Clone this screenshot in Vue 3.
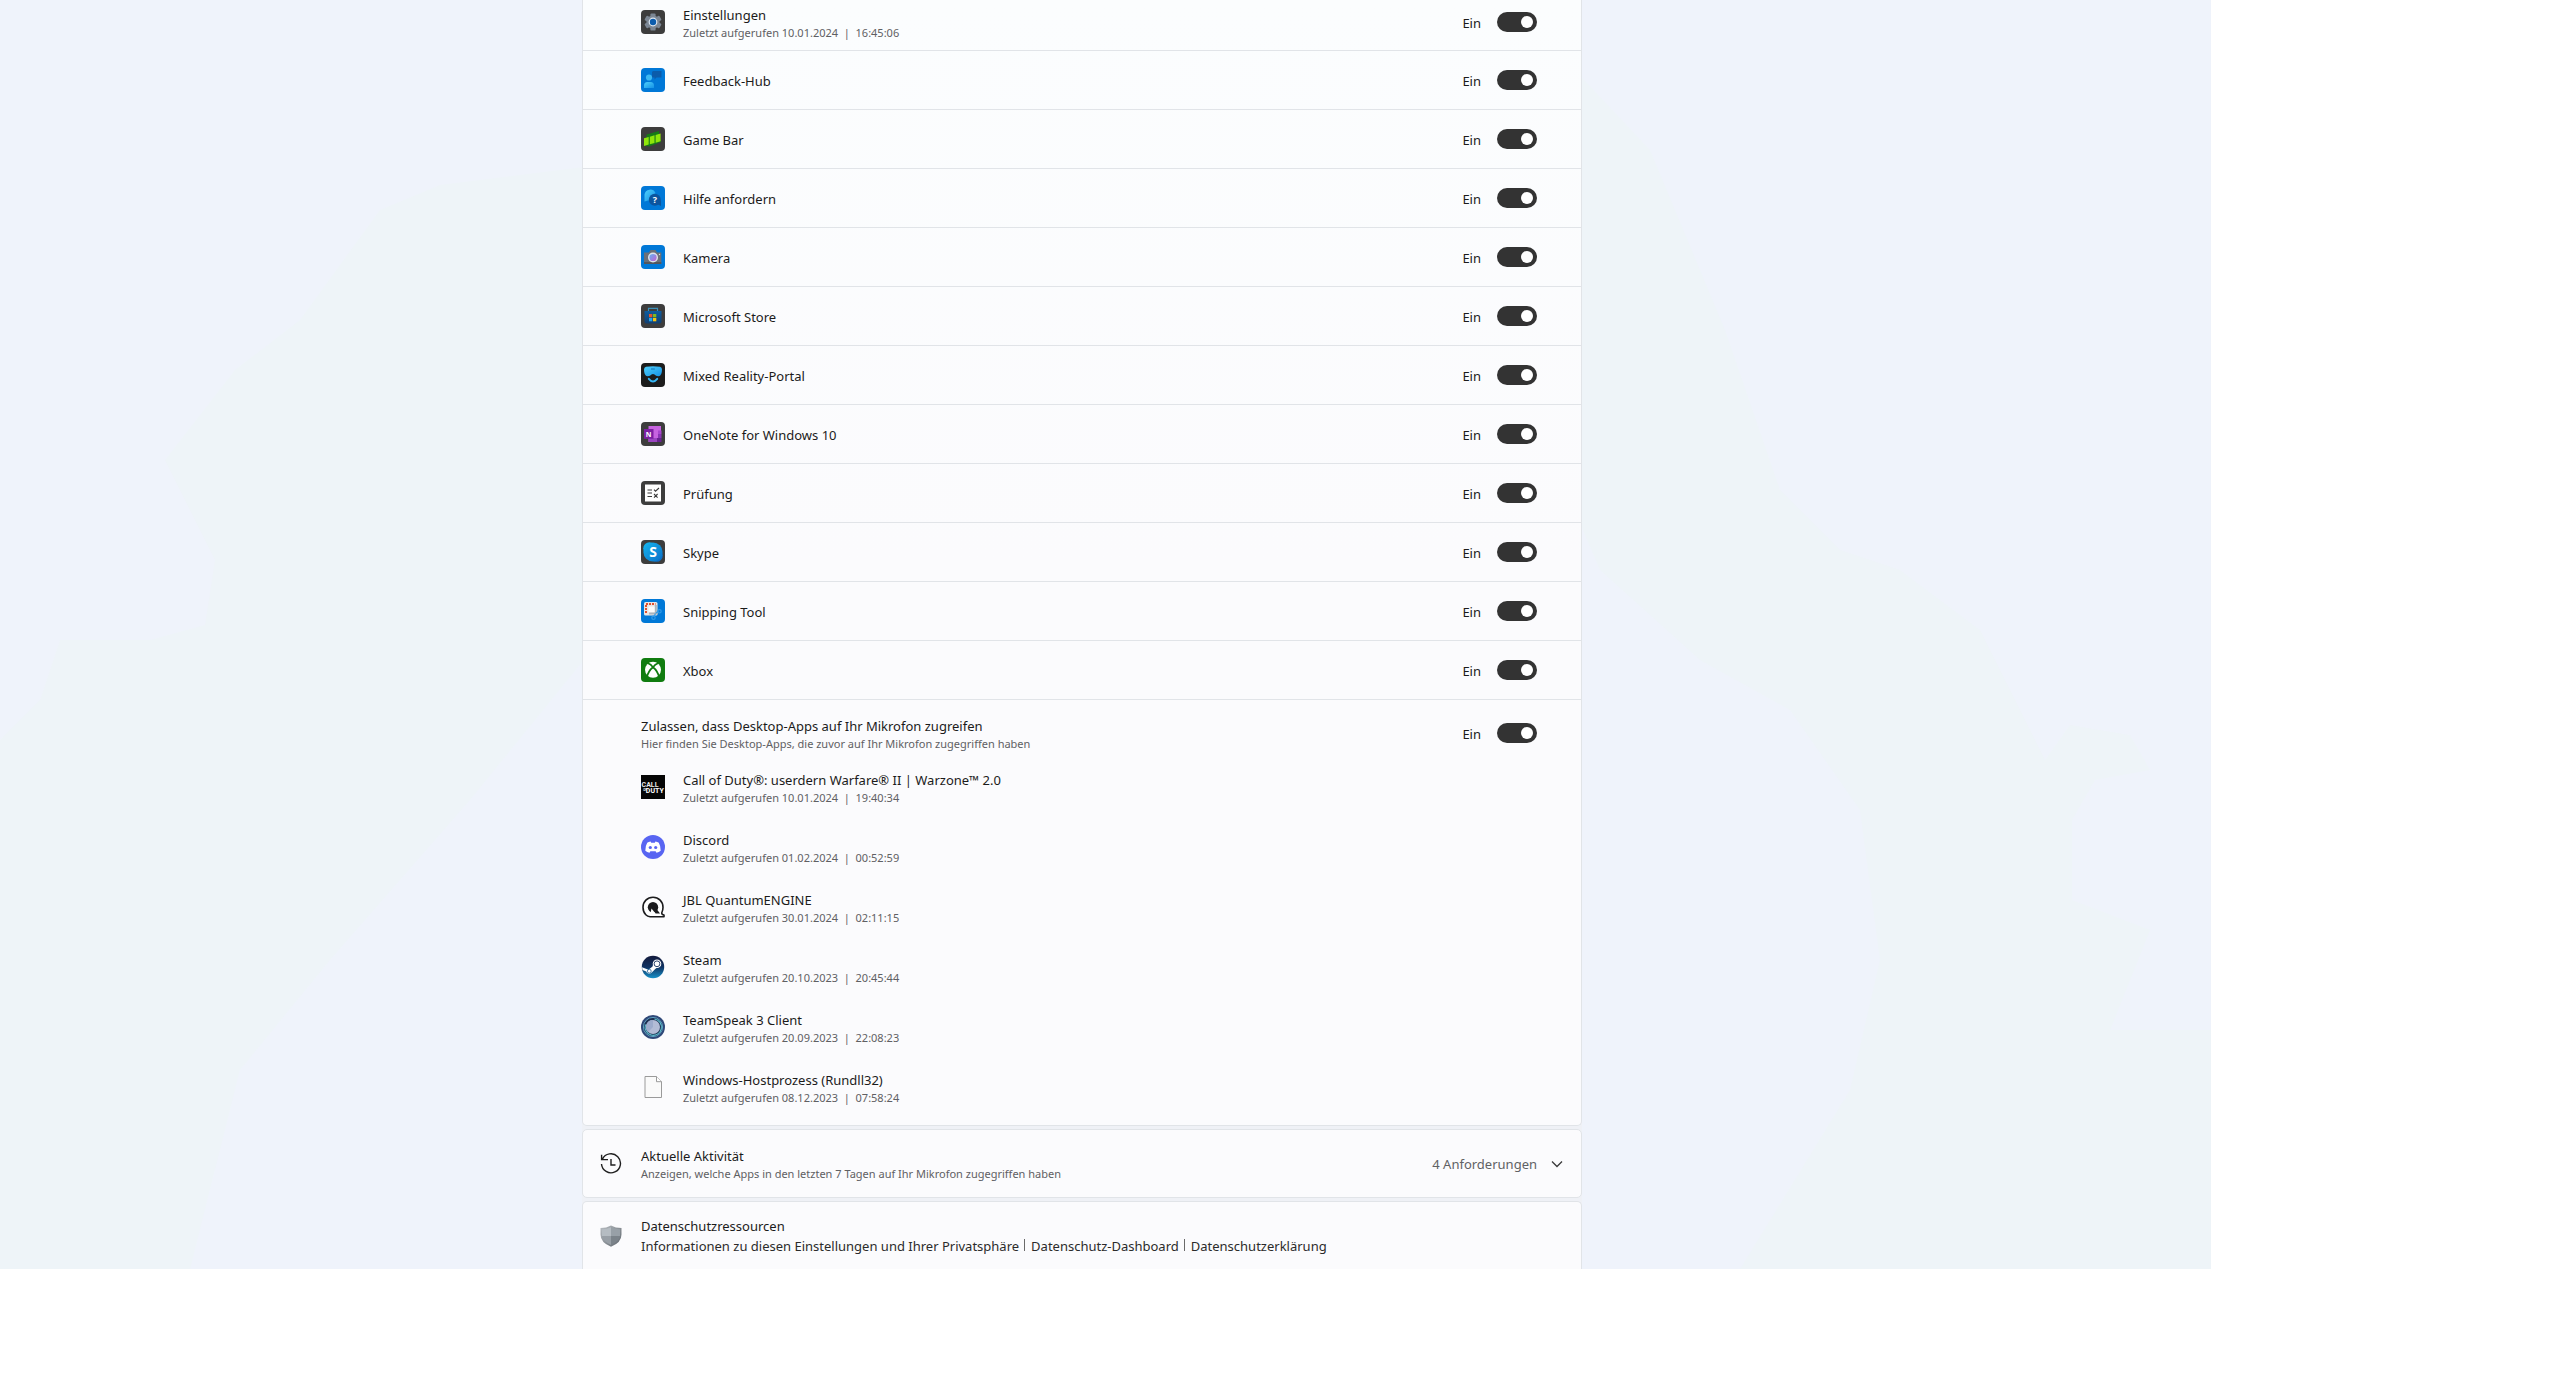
<script setup>
import { ref } from 'vue'

// Store-Apps mit eigenem Schalter
const apps = ref([
  { id: 'settings', name: 'Einstellungen', lastAccess: '10.01.2024  |  16:45:06', on: true },
  { id: 'feedback', name: 'Feedback-Hub', on: true },
  { id: 'gamebar', name: 'Game Bar', on: true },
  { id: 'help', name: 'Hilfe anfordern', on: true },
  { id: 'camera', name: 'Kamera', on: true },
  { id: 'store', name: 'Microsoft Store', on: true },
  { id: 'mixed', name: 'Mixed Reality-Portal', on: true },
  { id: 'onenote', name: 'OneNote for Windows 10', on: true },
  { id: 'test', name: 'Prüfung', on: true },
  { id: 'skype', name: 'Skype', on: true },
  { id: 'snipping', name: 'Snipping Tool', on: true },
  { id: 'xbox', name: 'Xbox', on: true }
])

const desktopAccess = ref(true)

const desktopApps = [
  { id: 'cod', name: 'Call of Duty®: userdern Warfare® II | Warzone™ 2.0', lastAccess: '10.01.2024  |  19:40:34' },
  { id: 'discord', name: 'Discord', lastAccess: '01.02.2024  |  00:52:59' },
  { id: 'jbl', name: 'JBL QuantumENGINE', lastAccess: '30.01.2024  |  02:11:15' },
  { id: 'steam', name: 'Steam', lastAccess: '20.10.2023  |  20:45:44' },
  { id: 'teamspeak', name: 'TeamSpeak 3 Client', lastAccess: '20.09.2023  |  22:08:23' },
  { id: 'file', name: 'Windows-Hostprozess (Rundll32)', lastAccess: '08.12.2023  |  07:58:24' }
]

const links = [
  'Informationen zu diesen Einstellungen und Ihrer Privatsphäre',
  'Datenschutz-Dashboard',
  'Datenschutzerklärung'
]
</script>

<template>
  <!-- Farbverläufe der Symbole -->
  <svg class="gradients" aria-hidden="true">
    <defs>
      <linearGradient id="g-sky" x1="0" y1="0" x2="1" y2="1">
        <stop offset="0" stop-color="#4fd0fb" /><stop offset="1" stop-color="#1492e6" />
      </linearGradient>
      <linearGradient id="g-skype" x1="0" y1="0" x2="1" y2="1">
        <stop offset="0" stop-color="#14b4ee" /><stop offset="1" stop-color="#0a6fc8" />
      </linearGradient>
      <linearGradient id="g-bag" x1="0" y1="0" x2="0" y2="1">
        <stop offset="0" stop-color="#0f5c9e" /><stop offset="1" stop-color="#123f70" />
      </linearGradient>
      <linearGradient id="g-steam" x1="0" y1="0" x2="0" y2="1">
        <stop offset="0" stop-color="#141a3c" /><stop offset="0.5" stop-color="#103262" /><stop offset="1" stop-color="#1590c8" />
      </linearGradient>
      <linearGradient id="g-lens" x1="0" y1="0" x2="1" y2="1">
        <stop offset="0" stop-color="#5fb4f4" /><stop offset="1" stop-color="#c85fd0" />
      </linearGradient>
      <linearGradient id="g-shield" x1="0" y1="0" x2="1" y2="1">
        <stop offset="0" stop-color="#b9bec3" /><stop offset="1" stop-color="#5f666d" />
      </linearGradient>
    </defs>
  </svg>

  <!-- Symbole für alle Listeneinträge -->
  <svg class="sprites" aria-hidden="true">
    <symbol id="settings" viewBox="0 0 24 24">
      <rect width="24" height="24" rx="4" fill="#3d3d3d" />
      <g fill="#7c8794">
        <rect x="9.4" y="3.4" width="5.2" height="17.2" rx="1.2" />
        <rect x="9.4" y="3.4" width="5.2" height="17.2" rx="1.2" transform="rotate(60 12 12)" />
        <rect x="9.4" y="3.4" width="5.2" height="17.2" rx="1.2" transform="rotate(120 12 12)" />
        <circle cx="12" cy="12" r="6.6" />
      </g>
      <circle cx="12" cy="12" r="4.4" fill="#dfe7ef" />
      <circle cx="12" cy="12" r="3.2" fill="#0b5cad" />
    </symbol>

    <symbol id="feedback" viewBox="0 0 24 24">
      <rect width="24" height="24" rx="4" fill="#0078d7" />
      <path d="M12 3h8.500v6.500h-5l-2 2v-2H11V4z" fill="#0b5cab" />
      <circle cx="8" cy="9.500" r="3.100" fill="#3cb8f2" />
      <path d="M3 20v-2.500A3.500 3.500 0 0 1 6.500 14h3A3.500 3.500 0 0 1 13 17.500V20z" fill="url(#g-sky)" />
    </symbol>

    <symbol id="gamebar" viewBox="0 0 24 24">
      <rect width="24" height="24" rx="4" fill="#3d3d3d" />
      <path d="M5.500 7.500 18 4v3L20 15 8 19.500 5 19z" fill="#167a16" />
      <path d="M3 11.200l4.700-1.300v7.600L3 18.900zM8.800 9.700l4.700-1.400v7.700l-4.700 1.300zM14.600 8l5-1.500v7.700l-5 1.500z" fill="#8fe60b" />
    </symbol>

    <symbol id="help" viewBox="0 0 24 24">
      <rect width="24" height="24" rx="4" fill="#0078d7" />
      <path d="M3.500 15.500V8.500A5.800 5.800 0 0 1 14.500 7L9 14z" fill="url(#g-sky)" />
      <circle cx="13.800" cy="13.800" r="6" fill="#0b559f" />
      <path d="M16 18l4 2v-6z" fill="#0b559f" />
      <text x="13.800" y="17" class="glyph" font-size="9" fill="#fff">?</text>
    </symbol>

    <symbol id="camera" viewBox="0 0 24 24">
      <rect width="24" height="24" rx="4" fill="#0078d7" />
      <path d="M3 7.500h5l1.500-2.500h5l1.500 2.500h4.300V19H3z" fill="#6b7078" />
      <path d="M3 17h17.300v2H3z" fill="#53575e" />
      <circle cx="18.500" cy="9.500" r="0.700" fill="#d5d8dc" />
      <circle cx="12" cy="12.500" r="5" fill="#dde3ec" />
      <circle cx="12" cy="12.500" r="3.600" fill="url(#g-lens)" />
    </symbol>

    <symbol id="store" viewBox="0 0 24 24">
      <rect width="24" height="24" rx="4" fill="#3d3d3d" />
      <path d="M7.500 7V4.300h9V7" fill="none" stroke="#3c8fb8" stroke-width="1.200" />
      <path d="M3.500 7h17v10.500a2 2 0 0 1-2 2h-13a2 2 0 0 1-2-2z" fill="url(#g-bag)" />
      <path d="M8 10h3.300v3.300H8z" fill="#e8562a" />
      <path d="M12 10h3.300v3.300H12z" fill="#7fba1e" />
      <path d="M8 14h3.300v3.300H8z" fill="#25a5ea" />
      <path d="M12 14h3.300v3.300H12z" fill="#fbc30f" />
    </symbol>

    <symbol id="mixed" viewBox="0 0 24 24">
      <rect width="24" height="24" rx="4" fill="#1c1c1c" />
      <path d="M5 3.800Q12 2.800 19 3.800Q21 4.200 21 6.500Q21 13 17.500 13.300Q15 13.500 13.500 11.500Q12 10.300 10.500 11.500Q9 13.500 6.500 13.300Q3 13 3 6.500Q3 4.200 5 3.800z" fill="url(#g-sky)" />
      <path d="M10 6h3.800" stroke="#1270b5" stroke-width="1" />
      <path d="M7.800 15.800Q12 21 16.200 15.800" fill="none" stroke="#35b6f5" stroke-width="2" stroke-linecap="round" />
    </symbol>

    <symbol id="onenote" viewBox="0 0 24 24">
      <rect width="24" height="24" rx="4" fill="#3d3d3d" />
      <path d="M7.500 4H20v16H7.500z" fill="#c763e0" />
      <path d="M17 8.500h3.500V12H17z" fill="#a946cf" />
      <path d="M17 12h3.500v4H17z" fill="#8a35b5" />
      <path d="M13.500 16h7v4h-7z" fill="#6a2390" />
      <path d="M7.500 16h8.500v4H7.500z" fill="#9a45c0" />
      <path d="M3 7h9.500v9.800H3z" fill="#7c1fa3" />
      <text x="7.600" y="14.600" class="glyph" font-size="7" fill="#fff">N</text>
    </symbol>

    <symbol id="test" viewBox="0 0 24 24">
      <rect width="24" height="24" rx="4" fill="#3d3d3d" />
      <path d="M4 3.500h16v17H4z" fill="#fff" />
      <path d="M6.500 9h4.500M6.500 12h4.500M6.500 15.500h4.500M13 8.700l1.500 1.500L18 7M13 13l3.600 3.600M16.600 13L13 16.600" fill="none" stroke="#3a3a3a" stroke-width="1.100" />
    </symbol>

    <symbol id="skype" viewBox="0 0 24 24">
      <rect width="24" height="24" rx="4" fill="#3d3d3d" />
      <circle cx="8.500" cy="8.500" r="6.300" fill="#12aeea" />
      <circle cx="15.500" cy="15.500" r="6.300" fill="#0a6fc8" />
      <circle cx="12" cy="12" r="9.600" fill="url(#g-skype)" />
      <text x="12" y="17" class="glyph" font-size="14" fill="#fff">S</text>
    </symbol>

    <symbol id="snipping" viewBox="0 0 24 24">
      <rect width="24" height="24" rx="4" fill="#0078d7" />
      <rect x="3" y="3" width="13.500" height="13.500" rx="1.500" fill="#e9e5e4" />
      <path d="M5 14V5h9.500" fill="none" stroke="#e0502e" stroke-width="2" stroke-dasharray="2 1" />
      <path d="M7.500 7.500h6.500v6H7.500z" fill="#fbfbfb" />
      <path d="M14.800 6v9.500M8 14.500h8.500" stroke="#a9b4bd" stroke-width="2" />
      <path d="M15 14l2.500-2M14.500 14.500l-1.500 3" stroke="#2f9ae8" stroke-width="1.200" />
      <circle cx="18.500" cy="12.300" r="1.700" fill="none" stroke="#2f9ae8" stroke-width="1.200" />
      <circle cx="12.500" cy="18.800" r="1.700" fill="none" stroke="#2f9ae8" stroke-width="1.200" />
    </symbol>

    <symbol id="xbox" viewBox="0 0 24 24">
      <rect width="24" height="24" rx="4" fill="#107c10" />
      <circle cx="12" cy="11.800" r="8" fill="#fff" />
      <path d="M5.500 20Q7.500 12.500 12 9.200Q16.500 12.500 18.500 20" fill="none" stroke="#107c10" stroke-width="1.800" />
      <path d="M7 5.200Q10 6.200 12 9.200Q14 6.200 17 5.200" fill="none" stroke="#107c10" stroke-width="1.600" />
    </symbol>

    <symbol id="cod" viewBox="0 0 24 24">
      <rect width="24" height="24" fill="#050505" />
      <text x="9" y="12" class="glyph narrow" font-size="7" fill="#e8e8e8">CALL</text>
      <text x="4" y="15.500" class="glyph narrow" font-size="3" fill="#e8e8e8">OF</text>
      <text x="13.800" y="18.200" class="glyph narrow" font-size="7" fill="#fff">DUTY</text>
    </symbol>

    <symbol id="discord" viewBox="0 0 24 24">
      <circle cx="12" cy="12" r="12" fill="#5865f2" />
      <path d="M9.600 6.600Q7.500 6.900 6.200 7.700Q4.200 11 4.300 15.700Q6 17.200 8.500 17.700L9.400 16.300H14.600L15.500 17.700Q18 17.200 19.700 15.700Q19.800 11 17.800 7.700Q16.500 6.900 14.400 6.600L13.800 7.700H10.200z" fill="#fff" />
      <circle cx="9.300" cy="12.500" r="1.600" fill="#5865f2" />
      <circle cx="14.700" cy="12.500" r="1.600" fill="#5865f2" />
    </symbol>

    <symbol id="jbl" viewBox="0 0 24 24">
      <path d="M12 2.300C6.300 2.300 2 6.500 2 12.300C2 15.500 3 18 4.800 19.800Q6.500 21.500 9 21.700H23V20Q20.800 19.800 20.700 18Q22 15.500 22 12.300C22 6.500 17.700 2.300 12 2.300z" fill="#fff" stroke="#1c1c1e" stroke-width="1.600" stroke-linejoin="round" />
      <circle cx="12" cy="12.200" r="5.200" fill="#1c1c1e" />
      <path d="M11 12.500h3.500l4.500 6h-4.500z" fill="#1c1c1e" />
      <path d="M9.500 18.500L10.500 13.500L14.500 18.500z" fill="#fff" />
    </symbol>

    <symbol id="steam" viewBox="0 0 24 24">
      <circle cx="12" cy="12" r="11.200" fill="url(#g-steam)" />
      <path d="M1 12.200L7.500 14.800L11.500 11.500L12.500 8.200L20 10L14.500 13.800L11 17.200Q9.500 19.200 7.300 18.500Q5.500 18 5.300 16.500L1.500 14.900z" fill="#fff" />
      <circle cx="16" cy="8.800" r="4.300" fill="#fff" />
      <circle cx="16" cy="8.800" r="2.900" fill="none" stroke="#16305c" stroke-width="0.900" />
      <circle cx="8.300" cy="16.200" r="1.900" fill="none" stroke="#1a5c94" stroke-width="0.800" />
    </symbol>

    <symbol id="teamspeak" viewBox="0 0 24 24">
      <circle cx="12" cy="12" r="12" fill="#2f4878" />
      <circle cx="12" cy="12" r="9.600" fill="#1e3152" stroke="#5f9fc0" stroke-width="1" />
      <circle cx="12" cy="12" r="7" fill="#b3bcd6" />
      <path d="M12 5A7 7 0 0 0 7 17L12 12z" fill="#9dabcc" />
      <path d="M13.500 4A8.200 8.200 0 1 1 4.500 9.500" fill="none" stroke="#5fc0d0" stroke-width="1.100" />
    </symbol>

    <symbol id="file" viewBox="0 0 24 24">
      <path d="M4 1.500h11.500l5 5.200v15.800H4z" fill="#fafafa" stroke="#9a9a9a" stroke-width="1" />
      <path d="M15.500 1.500v5.200h5" fill="#fff" stroke="#9a9a9a" stroke-width="1" />
    </symbol>
  </svg>

  <main class="settings-page">
    <svg class="backdrop" viewBox="0 0 2211 1269" preserveAspectRatio="none" aria-hidden="true">
      <path d="M600 165L440 185L380 210L300 320L235 370L165 460L215 560L205 625L150 640L60 640L40 700L0 740V1269H190L240 1070L330 960L470 800L600 640z" />
      <path d="M1570 65L1650 150L1725 330L1780 490L1840 550L1900 570L1980 630L2045 760L2070 725L2130 735L2150 770L2095 780L2072 820V900L2150 930L2110 1030H2211V1269H1740L1850 1090L1880 960L1860 810L1790 710L1700 660L1600 570L1570 500z" />
    </svg>

    <div class="content">
      <section class="card">
        <ul class="app-list">
          <li v-for="app in apps" :key="app.id" class="app-row">
            <svg class="app-icon"><use :href="'#' + app.id" /></svg>
            <div class="labels">
              <span :id="'name-' + app.id" class="title">{{ app.name }}</span>
              <span v-if="app.lastAccess" class="sub">Zuletzt aufgerufen {{ app.lastAccess }}</span>
            </div>
            <label class="toggle">
              <span>{{ app.on ? 'Ein' : 'Aus' }}</span>
              <input v-model="app.on" type="checkbox" role="switch" :aria-describedby="'name-' + app.id">
            </label>
          </li>
        </ul>

        <div class="desktop-head">
          <div class="labels">
            <span id="desktop-title" class="title">Zulassen, dass Desktop-Apps auf Ihr Mikrofon zugreifen</span>
            <span class="sub">Hier finden Sie Desktop-Apps, die zuvor auf Ihr Mikrofon zugegriffen haben</span>
          </div>
          <label class="toggle">
            <span>{{ desktopAccess ? 'Ein' : 'Aus' }}</span>
            <input v-model="desktopAccess" type="checkbox" role="switch" aria-describedby="desktop-title">
          </label>
        </div>

        <ul class="desktop-list">
          <li v-for="app in desktopApps" :key="app.id" class="desktop-row">
            <svg class="app-icon"><use :href="'#' + app.id" /></svg>
            <div class="labels">
              <span class="title">{{ app.name }}</span>
              <span class="sub">Zuletzt aufgerufen {{ app.lastAccess }}</span>
            </div>
          </li>
        </ul>
      </section>

      <button type="button" class="card activity">
        <svg class="lead-icon" viewBox="0 0 22 22" fill="none" stroke="#1f1f1f" stroke-width="1.4">
          <path d="M2.400 6.200A9.500 9.500 0 1 1 1.500 11M1.600 1.800V6.600H8M11 6v6h4.500" />
        </svg>
        <span class="labels">
          <span class="title">Aktuelle Aktivität</span>
          <span class="sub">Anzeigen, welche Apps in den letzten 7 Tagen auf Ihr Mikrofon zugegriffen haben</span>
        </span>
        <span class="count">4 Anforderungen</span>
        <svg class="chevron" viewBox="0 0 12 12" fill="none" stroke="#3a3a3a" stroke-width="1.3">
          <path d="M1 3.500l5 5 5-5" />
        </svg>
      </button>

      <section class="card resources">
        <svg class="lead-icon" viewBox="0 0 22 22">
          <path d="M11 0.500Q15.500 3 21.500 3V9.500Q21.500 17.500 11 21.800Q0.500 17.500 0.500 9.500V3Q6.500 3 11 0.500z" fill="url(#g-shield)" />
          <path d="M11 2.200V11H2V4.200Q7 4.200 11 2.200z" fill="#b5bcc2" />
          <path d="M11 2.200V11H20V4.200Q15 4.200 11 2.200z" fill="#98a0a7" />
          <path d="M11 11V20Q3 16.500 2 11z" fill="#989fa6" />
          <path d="M11 11V20Q19 16.500 20 11z" fill="#7b838a" />
        </svg>
        <div class="labels">
          <span class="title">Datenschutzressourcen</span>
          <nav class="links">
            <a v-for="link in links" :key="link" href="#">{{ link }}</a>
          </nav>
        </div>
      </section>
    </div>
  </main>
</template>

<style>
body {
  margin: 0;
  background: #fff;
}
</style>

<style scoped>
.gradients {
  position: absolute;
  width: 0;
  height: 0;
}
.sprites {
  display: none;
}
.glyph {
  font-family: "Open Sans", sans-serif;
  font-weight: 700;
  text-anchor: middle;
}
.glyph.narrow {
  font-family: Roboto, sans-serif;
}
.settings-page {
  position: relative;
  display: grid;
  grid-template-columns: 582fr minmax(640px, 1000px) 629fr;
  width: calc(100% - 349px);
  overflow: hidden;
  background: #eff3fb;
  color: #1b1b1b;
  font-family: "Noto Sans", "Open Sans", sans-serif;
  font-size: 13px;
  line-height: 20px;
}
.backdrop {
  position: absolute;
  width: 100%;
  height: 100%;
  fill: #eef4f8;
}
.content {
  position: relative;
  grid-column: 2;
  display: flex;
  flex-direction: column;
  gap: 3px;
  background: #eff1f6;
}
.card {
  box-sizing: border-box;
  border: 1px solid #e1e4e8;
  border-radius: 5px;
  background: #fbfbfd;
}
.card:first-child {
  border-top: 0;
  border-radius: 0 0 5px 5px;
  background: linear-gradient(#fbfdfe, #fbfbfd 50%);
}
.app-list,
.desktop-list {
  margin: 0;
  padding: 0;
  list-style: none;
}
.app-row,
.desktop-head,
.desktop-row {
  display: flex;
  align-items: center;
  padding: 0 44px 0 58px;
}
.app-row {
  height: 58px;
  border-bottom: 1px solid #e1e4e8;
}
/* erste Zeile ist oben angeschnitten */
.app-row:first-child {
  height: 44px;
  padding-bottom: 6px;
}
.app-icon {
  flex: none;
  width: 24px;
  height: 24px;
  margin-right: 18px;
}
.labels {
  display: flex;
  flex: 1;
  flex-direction: column;
}
.app-list .labels,
.desktop-head .labels,
.desktop-list .labels,
.toggle span {
  padding-top: 2px;
}
.sub {
  color: #5f6063;
  font-size: 11px;
  line-height: 16px;
  white-space: pre;
}
.toggle {
  display: flex;
  align-items: center;
  gap: 16px;
}
.toggle input {
  display: flex;
  align-items: center;
  justify-content: flex-start;
  box-sizing: border-box;
  width: 40px;
  height: 20px;
  margin: 0;
  padding: 0 4px;
  border-radius: 10px;
  background: #333;
  appearance: none;
}
.toggle input::before {
  width: 12px;
  height: 12px;
  border-radius: 50%;
  background: #fff;
  content: "";
}
.toggle input:checked {
  justify-content: flex-end;
}
.desktop-head {
  height: 48px;
  padding-top: 9px;
}
.desktop-row {
  height: 60px;
}
.desktop-list {
  padding-bottom: 8px;
}
.activity {
  display: flex;
  align-items: center;
  height: 69px;
  padding: 0 18px 0 17px;
  color: inherit;
  font: inherit;
  text-align: left;
}
.lead-icon {
  flex: none;
  width: 22px;
  height: 22px;
  margin-right: 19px;
}
.count {
  color: #606164;
}
.chevron {
  width: 12px;
  height: 12px;
  margin-left: 14px;
}
.resources {
  display: flex;
  align-items: center;
  height: 68px;
  padding: 0 17px;
  border-bottom: 0;
  border-radius: 5px 5px 0 0;
}
.links {
  display: flex;
}
.links a {
  color: #2b2b2b;
  text-decoration: none;
}
.links a + a::before {
  display: inline-block;
  width: 1px;
  height: 12px;
  margin: 0 6px 0 5px;
  background: #6a6a6a;
  content: "";
}
</style>
